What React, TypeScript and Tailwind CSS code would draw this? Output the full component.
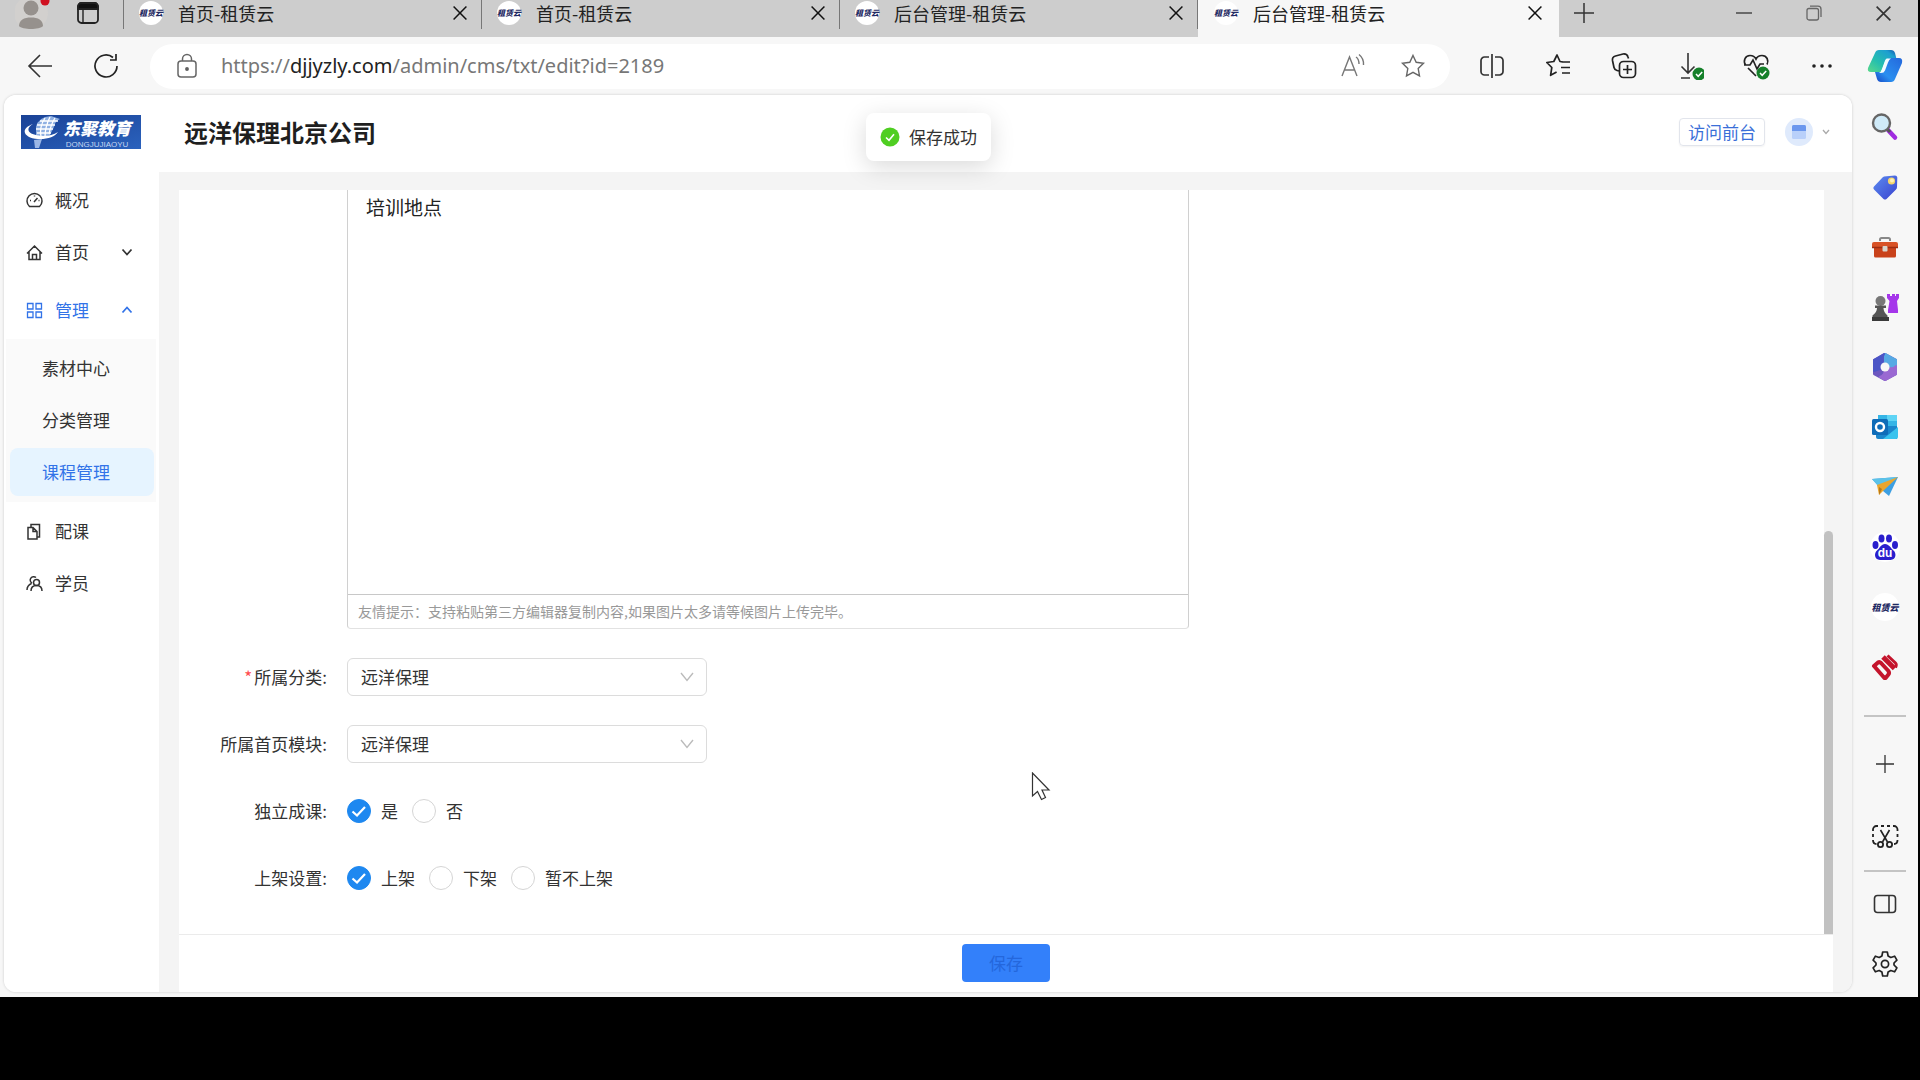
import React from "react";

type IconProps = { className?: string };

const CloseIcon = ({ className = "h-3 w-3" }: IconProps) => (
  <svg viewBox="0 0 12 12" className={className} fill="none" stroke="currentColor" strokeWidth="1.3">
    <path d="M0.5 0.5 11.5 11.5M11.5 0.5 0.5 11.5" />
  </svg>
);

const Favicon = () => (
  <span className="flex h-6 w-6 shrink-0 items-center justify-center rounded-full bg-white">
    <span className="text-[8px] leading-none font-black whitespace-nowrap text-[#1f2a63] italic">租赁云</span>
  </span>
);

const Tab = ({ title, active = false }: { title: string; active?: boolean }) => (
  <div
    className={
      active
        ? "flex w-[361px] items-start bg-[#f7f7f7] pr-[3px] pl-4"
        : "flex w-[358px] items-start pl-[15px]"
    }
  >
    <div className="flex h-[26px] flex-1 items-center gap-[15px]">
      <Favicon />
      <span className="flex-1 text-[18px] leading-6 text-[#222]">{title}</span>
      <button aria-label="关闭标签页" className="mr-[14px] text-[#111]">
        <CloseIcon className="h-[14px] w-[14px]" />
      </button>
    </div>
    {!active && <span className="h-[29px] w-px bg-[#777]" />}
  </div>
);

const TabStrip = () => (
  <div className="flex h-[37px] shrink-0 overflow-hidden bg-[#cdcdcd]">
    <div className="flex h-[29px] w-[124px] items-start border-r border-[#777] pl-[15px]">
      <button aria-label="用户配置" className="h-[29px] w-9">
        <svg viewBox="0 0 36 29" className="h-[29px] w-9">
          <circle cx="16" cy="13" r="17" fill="#d2d0ce" />
          <circle cx="16" cy="8" r="7.5" fill="#96918d" />
          <path d="M4 26c0-6 5-8.5 12-8.5S28 20 28 26c-3 4-21 4-24 0Z" fill="#96918d" />
          <circle cx="30" cy="1" r="4.500" fill="#cf1020" />
        </svg>
      </button>
      <button aria-label="标签页操作" className="ml-[25px] h-[26px] w-[24px]">
        <svg viewBox="0 0 24 26" className="h-[26px] w-[24px]" fill="none" stroke="#222" strokeWidth="1.8">
          <rect x="2" y="3" width="20" height="20" rx="3.5" />
          <path d="M2 9V6.500A3.500 3.500 0 0 1 5.500 3h13A3.500 3.500 0 0 1 22 6.500V9Z" fill="#111" />
          <path d="M7 9v14" strokeWidth="1.4" />
        </svg>
      </button>
    </div>
    <Tab title="首页-租赁云" />
    <Tab title="首页-租赁云" />
    <Tab title="后台管理-租赁云" />
    <Tab title="后台管理-租赁云" active />
    <button aria-label="新建标签页" className="ml-[14px] flex h-[26px] items-center text-[#333]">
      <svg viewBox="0 0 22 22" className="h-[22px] w-[22px]" stroke="currentColor" strokeWidth="1.5">
        <path d="M11 1v20M1 11h20" />
      </svg>
    </button>
    <div className="ml-auto flex h-[26px] items-center gap-[54px] pr-[27px] text-[#333]">
      <button aria-label="最小化">
        <svg viewBox="0 0 16 16" className="h-4 w-4" stroke="currentColor" strokeWidth="1.3">
          <path d="M0 8h16" />
        </svg>
      </button>
      <button aria-label="还原">
        <svg viewBox="0 0 16 16" className="h-4 w-4" fill="none" stroke="#666" strokeWidth="1.3">
          <rect x="1" y="3.500" width="11.500" height="11.500" rx="2" />
          <path d="M4 1.200h8a3 3 0 0 1 3 3V12" />
        </svg>
      </button>
      <button aria-label="关闭">
        <CloseIcon className="h-[15px] w-[15px]" />
      </button>
    </div>
  </div>
);

const starPath = "M13 2.500l3.200 6.800 7.300 1-5.300 5.200 1.300 7.400L13 19.300l-6.500 3.600 1.300-7.400L2.500 10.300l7.300-1Z";

const CopilotIcon = () => (
  <svg viewBox="0 0 36 34" className="h-[34px] w-9">
    <defs>
      <linearGradient id="cpA" x1="0" y1="1" x2="1" y2="0">
        <stop offset="0" stopColor="#5bd98a" />
        <stop offset="0.4" stopColor="#25bfae" />
        <stop offset="0.8" stopColor="#1d9fd0" />
        <stop offset="1" stopColor="#1450a8" />
      </linearGradient>
      <linearGradient id="cpB" x1="0" y1="1" x2="1" y2="0">
        <stop offset="0" stopColor="#1546c4" />
        <stop offset="0.35" stopColor="#2a8ff0" />
        <stop offset="1" stopColor="#2468dc" />
      </linearGradient>
    </defs>
    <path d="M8 4q1-3 4-3h12q3 0 4 3l1.500 6H22q-3 0-4 3l-4 10H4q-4 0-3-4Z" fill="url(#cpA)" />
    <path d="M28 30q-1 3-4 3H14q-3 0-4-3l-2-7h6q2 0 3-3l3.500-9q1-2 4-2H32q4 0 3 5Z" fill="url(#cpB)" />
    <path d="M20 9.500h4q-2 1-3 4l-3 8q-1 2.500-4 2.500h-2q2-1 3-4l2.500-7q1-3.500 2.500-3.500Z" fill="#f3fbff" />
  </svg>
);

const GreenTick = ({ cx, cy }: { cx: number; cy: number }) => (
  <g>
    <circle cx={cx} cy={cy} r="6.500" fill="#15802a" stroke="none" />
    <path d={`M${cx - 3} ${cy}l2.200 2.300 4-4.300`} stroke="#fff" strokeWidth="1.500" fill="none" />
  </g>
);

const tool = "h-7 w-7";

const Toolbar = () => (
  <div className="flex h-[58px] shrink-0 items-center bg-[#f7f7f7]">
    <button aria-label="后退" className="ml-[26px]">
      <svg viewBox="0 0 28 28" className={tool} fill="none" stroke="#333" strokeWidth="1.600">
        <path d="M26 14H3M14 3 3 14l11 11" />
      </svg>
    </button>
    <button aria-label="刷新" className="ml-[38px]">
      <svg viewBox="0 0 28 28" className={tool} fill="none" stroke="#222" strokeWidth="1.700">
        <path d="M25 14a11 11 0 1 1-4-8.500M24 2v6h-6" />
      </svg>
    </button>
    <div className="ml-[30px] flex h-[45px] flex-1 items-center rounded-full bg-white pr-6 pl-[27px]">
      <svg viewBox="0 0 20 26" className="h-[26px] w-5 shrink-0" fill="none" stroke="#666" strokeWidth="1.500">
        <rect x="1" y="8" width="18" height="16" rx="3" />
        <path d="M5.500 8V6a4.500 4.500 0 0 1 9 0v2" />
        <circle cx="10" cy="16" r="1.200" fill="#333" />
      </svg>
      <a
        href="#address"
        className="ml-6 flex-1 font-['Noto_Sans','Noto_Sans_CJK_SC',sans-serif] text-[20px] leading-7 whitespace-nowrap text-[#777]"
      >
        https://<span className="text-[#222]">djjyzly.com</span>/admin/cms/txt/edit?id=2189
      </a>
      <button aria-label="大声朗读" className="mr-[34px]">
        <svg viewBox="0 0 26 26" className="h-[26px] w-[26px]" fill="none" stroke="#777" strokeWidth="1.400">
          <path d="M2 23 9.500 4 17 23M4.800 17h9.500M16 4q3 2 3 7M19 1.500q5 4 4.500 10.500" />
        </svg>
      </button>
      <button aria-label="收藏此页">
        <svg viewBox="0 0 26 26" className="h-[26px] w-[26px]" fill="none" stroke="#666" strokeWidth="1.400">
          <path d={starPath} />
        </svg>
      </button>
    </div>
    <div className="flex items-center gap-[38px] pl-7">
      <button aria-label="分屏">
        <svg viewBox="0 0 28 28" className={tool} fill="none" stroke="#333" strokeWidth="1.700">
          <path d="M11 5H6.500A3.500 3.500 0 0 0 3 8.500v11A3.500 3.500 0 0 0 6.500 23H11M17 5h4.500A3.500 3.500 0 0 1 25 8.500v11a3.500 3.500 0 0 1-3.500 3.500H17M14 2v24" />
        </svg>
      </button>
      <button aria-label="收藏夹">
        <svg viewBox="0 0 28 28" className={tool} fill="none" stroke="#222" strokeWidth="1.700" strokeLinejoin="round">
          <path d="M18.500 9.800 16 9.500 13 3l-3.200 6.500-7 1 5 5-1.200 7.800 6-3.300M18 10h8M17 15.500h9M18 21h8" />
        </svg>
      </button>
      <button aria-label="集锦">
        <svg viewBox="0 0 28 28" className={tool} fill="none" stroke="#222" strokeWidth="1.700">
          <rect x="9.500" y="9.500" width="16" height="16" rx="4" />
          <path d="M17.500 13v9M13 17.500h9M9 19l-2-.5a4 4 0 0 1-3-3L2.500 8.500a4 4 0 0 1 3-4.500L13 2q4-.5 5 3l.5 1.500" />
        </svg>
      </button>
      <button aria-label="下载">
        <svg viewBox="0 0 28 28" className={tool} fill="none" stroke="#333" strokeWidth="1.600">
          <path d="M12 1v20M5.500 14.500 12 21l6.500-6.500M5 26h9" />
          <GreenTick cx={23} cy={22} />
        </svg>
      </button>
      <button aria-label="浏览器概要">
        <svg viewBox="0 0 28 28" className={tool} fill="none" stroke="#222" strokeWidth="1.700">
          <path d="m14 24-3-3M3.500 13C1 9 3 3.500 8 3.500c3 0 5 1.500 6 3.500 1-2 3-3.500 6-3.500 5 0 7 5 5 9M2 13h6l3-5 4 9 3-5h4M6 16l6 6" />
          <GreenTick cx={21} cy={21} />
        </svg>
      </button>
      <button aria-label="设置及其他">
        <svg viewBox="0 0 28 28" className={tool} fill="#222">
          <circle cx="6" cy="14" r="1.800" />
          <circle cx="14" cy="14" r="1.800" />
          <circle cx="22" cy="14" r="1.800" />
        </svg>
      </button>
    </div>
    <button aria-label="Copilot" className="mr-[15px] ml-[31px]">
      <CopilotIcon />
    </button>
  </div>
);

const SideCell = ({ label, children }: { label: string; children: React.ReactNode }) => (
  <button aria-label={label} className="flex h-[60px] w-full shrink-0 items-center justify-center">
    {children}
  </button>
);

const side = "h-7 w-7";

const EdgeSidebar = () => (
  <aside className="flex w-[66px] shrink-0 flex-col items-center pt-[2px]">
    <SideCell label="搜索">
      <svg viewBox="0 0 28 28" className={side}>
        <path d="m17 17 7 7.500" stroke="#a02be0" strokeWidth="4.500" strokeLinecap="round" />
        <path d="m16 16 3 3" stroke="#555" strokeWidth="3" />
        <circle cx="10.500" cy="10" r="8.500" fill="#cfeaf8" stroke="#666" strokeWidth="2.400" />
      </svg>
    </SideCell>
    <SideCell label="购物">
      <svg viewBox="0 0 28 28" className={side}>
        <defs>
          <linearGradient id="tag" x1="0" y1="0" x2="1" y2="1">
            <stop offset="0" stopColor="#5c8df0" />
            <stop offset="1" stopColor="#3941cf" />
          </linearGradient>
        </defs>
        <path d="M13 3.500 24 2.500q2 0 2.300 2L26 14q0 1.500-1 2.500L15.500 26q-1.500 1.200-3 0L3 16.500q-1.500-1.500 0-3L11.500 4.500Z" fill="url(#tag)" />
        <circle cx="20.500" cy="8" r="3.600" fill="#f5d56a" />
        <circle cx="21" cy="7.500" r="2" fill="#fff1b5" />
      </svg>
    </SideCell>
    <SideCell label="工具">
      <svg viewBox="0 0 28 28" className={side}>
        <path d="M9 8V6.500Q9 5 10.500 5h7Q19 5 19 6.500V8" fill="none" stroke="#888" strokeWidth="2" />
        <path d="M3 14h22v9q0 1.500-1.500 1.500h-19Q3 24.500 3 23Z" fill="#c9421b" />
        <path d="M1 11q0-2 2-2h22q2 0 2 2v4H1Z" fill="#d85226" />
        <path d="M1 14.500h26" stroke="#9d2d12" strokeWidth="1.500" />
        <rect x="11.500" y="13" width="5" height="5.500" rx="1" fill="#d8d4cc" />
      </svg>
    </SideCell>
    <SideCell label="游戏">
      <svg viewBox="0 0 28 28" className={side}>
        <path d="M16 1h3v2h2V1h3v2h1V1h3v4l-2 3 1 9v3H17v-3l1.500-9L16 5Z" fill="#a536ea" />
        <circle cx="9.500" cy="8" r="5" fill="#777" />
        <path d="M4 12.500h11v2.500h-2.500q0 4 4 7.500v5H1.500v-5q4.500-3.500 4.500-7.500H4Z" fill="#555" />
        <path d="M1 24h17v4H1Z" fill="#3a3a3a" />
      </svg>
    </SideCell>
    <SideCell label="Microsoft 365">
      <svg viewBox="0 0 28 28" className={side}>
        <path d="M14 1 25 7v14l-11 6L3 21V7Z" fill="#6d57bf" stroke="#6d57bf" strokeWidth="2" strokeLinejoin="round" />
        <path d="M14 14V1l11 6v14Z" fill="#56a9e4" stroke="#56a9e4" strokeWidth="2" strokeLinejoin="round" />
        <path d="M14 14 3 18V7l10-6q-2 3-1 8Z" fill="#4b55c6" stroke="#4b55c6" strokeWidth="2" strokeLinejoin="round" />
        <path d="M14 14q8 3 11-1v8l-11 6-5-3q6-2 5-10Z" fill="#9a69d2" stroke="#9a69d2" strokeWidth="2" strokeLinejoin="round" />
        <circle cx="14" cy="14" r="4.500" fill="#f7f7f7" />
      </svg>
    </SideCell>
    <SideCell label="Outlook">
      <svg viewBox="0 0 28 28" className={side}>
        <rect x="7" y="2" width="19" height="14" fill="#35b5e6" />
        <rect x="16" y="2" width="10" height="6" fill="#5fd4f5" />
        <path d="M5 13h21v13H7q-2 0-2-2Z" fill="#1b86cc" />
        <path d="m12 26 15-12v10q0 2-2 2Z" fill="#39c3ee" />
        <rect x="1" y="6" width="16" height="16" rx="1.500" fill="#0f6cb8" />
        <circle cx="9" cy="14" r="4" fill="none" stroke="#fff" strokeWidth="2.400" />
      </svg>
    </SideCell>
    <SideCell label="Drop">
      <svg viewBox="0 0 28 28" className={side}>
        <path d="M1 6 27 4 18 23 12 18Z" fill="#3d9fe2" />
        <path d="M1 6 27 4 8 14Z" fill="#5cc2e8" />
        <path d="m6 12 21-8L12 18l-4 4Z" fill="#eba52c" />
        <path d="m8 14 3 2-3 6Z" fill="#b87918" />
      </svg>
    </SideCell>
    <SideCell label="百度">
      <span className="flex h-[30px] w-[30px] items-center justify-center rounded-full bg-white">
        <svg viewBox="0 0 28 28" className={side} fill="#2a1fcd">
          <ellipse cx="4.500" cy="12" rx="3" ry="3.900" />
          <ellipse cx="10.500" cy="5.500" rx="3" ry="4" />
          <ellipse cx="18" cy="5.500" rx="3" ry="4" />
          <ellipse cx="24" cy="12" rx="3" ry="3.900" />
          <path d="M14 11c-4 0-5 4-8 6.500s-3 9 3 9.500h10.500c6-.5 6-7 3-9.500S18 11 14 11Z" />
          <text x="14" y="24" textAnchor="middle" fontFamily="Liberation Sans, sans-serif" fontSize="12" fontWeight="700" fill="#fff">
            du
          </text>
        </svg>
      </span>
    </SideCell>
    <SideCell label="租赁云">
      <span className="flex h-7 w-7 items-center justify-center rounded-full bg-white">
        <span className="text-[9px] leading-none font-black whitespace-nowrap text-[#1f2a63] italic">租赁云</span>
      </span>
    </SideCell>
    <SideCell label="DJ">
      <svg viewBox="0 0 28 28" className={side} fill="none" stroke="#c4142c">
        <path d="M3 13 7 9.500q1.500-1 3 .5l7 7.500q2 2.500 0 4.500l-2 2.500q-1 1-2 0Z" strokeWidth="4" strokeLinejoin="round" />
        <path d="m12 4 11.500 11.500" strokeWidth="5" />
        <path d="m16.500 2.500 8 7.500q1.500 1.500 0 4.500" strokeWidth="3" />
      </svg>
    </SideCell>
    <hr className="mt-[18px] w-[42px] shrink-0 border-t-2 border-[#c4c4c4]" />
    <div className="mt-[17px] flex w-full flex-col">
      <SideCell label="自定义">
        <svg viewBox="0 0 18 18" className="h-[18px] w-[18px]" stroke="#333" strokeWidth="1.300">
          <path d="M9 0v18M0 9h18" />
        </svg>
      </SideCell>
    </div>
    <div className="mt-3 flex w-full flex-col">
      <SideCell label="截图">
        <svg viewBox="0 0 28 28" className={side} fill="none" stroke="#222" strokeWidth="1.800">
          <path d="M2 9V7.500A3.500 3.500 0 0 1 5.500 4H7M10 4h3M16 4h3M22 4h1a3.500 3.500 0 0 1 3.500 3.500V9M2 12v3M26.500 12v3M2 18q0 4 3.500 4M26.500 18q0 4-3.500 4" />
          <path d="m9.500 8 7 12M18.500 8l-7 12" strokeWidth="1.600" />
          <circle cx="9.500" cy="22.500" r="2.600" />
          <circle cx="18.500" cy="22.500" r="2.600" />
        </svg>
      </SideCell>
    </div>
    <hr className="mt-1 w-[42px] shrink-0 border-t-2 border-[#c4c4c4]" />
    <div className="mt-[2px] flex w-full flex-col">
      <SideCell label="侧栏">
        <svg viewBox="0 0 24 20" className="h-5 w-6" fill="none" stroke="#333" strokeWidth="1.600">
          <rect x="1.500" y="1.500" width="21" height="17" rx="3" />
          <path d="M16 1.500v17" />
        </svg>
      </SideCell>
      <SideCell label="设置">
        <svg viewBox="0 0 28 28" className={side} fill="none" stroke="#222" strokeWidth="1.700" strokeLinejoin="round">
          <path d="M11.700 2h4.600l.8 4 2.700 1.500 3.800-1.300 2.300 4L23 13v2l2.900 2.800-2.300 4-3.800-1.300-2.700 1.500-.8 4h-4.600l-.8-4-2.700-1.500-3.800 1.300-2.300-4L5 15v-2l-2.900-2.800 2.300-4 3.800 1.300L10.900 6Z" />
          <circle cx="14" cy="14" r="3.600" />
        </svg>
      </SideCell>
    </div>
  </aside>
);

const Logo = () => (
  <div className="flex h-[34px] w-[120px] items-center overflow-hidden bg-gradient-to-br from-[#1a4296] to-[#2b62bd] text-white">
    <svg viewBox="0 0 42 34" className="h-[34px] w-[42px] shrink-0" fill="none" stroke="#fff">
      <path d="M15 12Q17 2 30 1l9 3q-5 2-6 8l-4 8-8 3-6-3Z" fill="#8fb0e2" stroke="none" />
      <path d="M19 6h18M16 10h18M15 14h17M16 18h14M24 3q-6 9-4 19M29 2q-5 10-5 20M34 3q-4 6-6 16" strokeWidth="1.300" />
      <path d="M12 9C-2 14 3 23 17 24c9 .5 17-2 20-7-6 4-15 5-22 3-9-2-10-7-3-11Z" fill="#fff" stroke="none" />
      <path d="m13 25 8-1-3 9h-4Z" fill="#9bb7e6" stroke="none" />
    </svg>
    <div className="flex flex-col items-center">
      <span className="text-[17px] leading-[25px] font-black whitespace-nowrap italic">东聚教育</span>
      <span className="font-['Liberation_Sans',sans-serif] text-[8px] leading-[9px] whitespace-nowrap text-[#c5d6f2]">DONGJUJIAOYU</span>
    </div>
  </div>
);

const Header = () => (
  <header className="flex h-[77px] shrink-0 items-center bg-white pr-[22px] pb-[3px] pl-[17px]">
    <Logo />
    <h1 className="ml-[43px] text-[24px] leading-8 font-bold text-[#1f1f1f]">远洋保理北京公司</h1>
    <div className="ml-auto flex items-center">
      <button className="h-7 rounded-sm border border-[#e2e5ec] px-2 text-[17px] leading-6 text-[#3a6fd8] shadow-xs">访问前台</button>
      <button aria-label="账户" className="ml-5 flex items-center gap-[9px]">
        <span className="flex h-7 w-7 items-center justify-center rounded-full bg-[#dfeafc]">
          <svg viewBox="0 0 14 14" className="h-[14px] w-[14px]">
            <rect width="14" height="14" rx="1.500" fill="#b9d0fa" />
            <path d="M0 1.500Q0 0 1.500 0h11Q14 0 14 1.500V6H0Z" fill="#6b97ee" />
          </svg>
        </span>
        <svg viewBox="0 0 8 6" className="h-[6px] w-2" fill="none" stroke="#aaa" strokeWidth="1.300">
          <path d="m1 1 3 3.500L7 1" />
        </svg>
      </button>
    </div>
  </header>
);

const menuIcon = "h-[17px] w-[17px]";

const MenuItem = ({ icon, label, active = false, arrow }: { icon: React.ReactNode; label: string; active?: boolean; arrow?: "up" | "down" }) => (
  <a
    href="#menu"
    className={
      active
        ? "flex h-12 items-center pr-[26px] pl-[22px] text-[17px] text-[#3273e8]"
        : "flex h-12 items-center pr-[26px] pl-[22px] text-[17px] text-[#333]"
    }
  >
    {icon}
    <span className="ml-3 flex-1">{label}</span>
    {arrow && (
      <svg viewBox="0 0 12 8" className="h-2 w-3" fill="none" stroke="currentColor" strokeWidth="1.800">
        <path d={arrow === "up" ? "m1.500 6.500 4.500-5 4.500 5" : "m1.500 1.500 4.500 5 4.500-5"} />
      </svg>
    )}
  </a>
);

const SubItem = ({ label, active = false }: { label: string; active?: boolean }) => (
  <a
    href="#submenu"
    className={
      active
        ? "mr-[2px] ml-1 flex h-12 items-center rounded-lg bg-[#e6f4ff] pl-8 text-[17px] text-[#3273e8]"
        : "mr-[2px] ml-1 flex h-12 items-center rounded-lg pl-8 text-[17px] text-[#333]"
    }
  >
    {label}
  </a>
);

const SideMenu = () => (
  <nav className="flex w-[155px] shrink-0 flex-col bg-white pt-1">
    <div className="flex flex-col gap-1">
      <MenuItem
        label="概况"
        icon={
          <svg viewBox="0 0 17 17" className={menuIcon} fill="none" stroke="currentColor" strokeWidth="1.500">
            <path d="M3.500 14.500a7.500 7.500 0 1 1 10 0ZM8 10l3.500-4M8.500 3.500v1M4 8.500h1M12.500 8.500h1" />
          </svg>
        }
      />
      <MenuItem
        label="首页"
        arrow="down"
        icon={
          <svg viewBox="0 0 17 17" className={menuIcon} fill="none" stroke="currentColor" strokeWidth="1.500">
            <path d="M1 9.500 8.500 2 16 9.500M3 8v7.500h11V8M6.500 15v-4.500h4V15" />
          </svg>
        }
      />
    </div>
    <div className="mt-[10px]">
      <MenuItem
        label="管理"
        active
        arrow="up"
        icon={
          <svg viewBox="0 0 17 17" className={menuIcon} fill="none" stroke="currentColor" strokeWidth="1.300">
            <path d="M1.500 1.500h5.500v5.500H1.500ZM10 1.500h5.500v5.500H10ZM1.500 10h5.500v5.500H1.500ZM10 10h5.500v5.500H10Z" />
          </svg>
        }
      />
    </div>
    <div className="mt-[5px] mr-[3px] ml-[2px] flex flex-col gap-1 bg-[#fafafa] pt-[5px] pb-[6px]">
      <SubItem label="素材中心" />
      <SubItem label="分类管理" />
      <SubItem label="课程管理" active />
    </div>
    <div className="mt-[5px] flex flex-col gap-1">
      <MenuItem
        label="配课"
        icon={
          <svg viewBox="0 0 17 17" className={menuIcon} fill="none" stroke="currentColor" strokeWidth="1.500">
            <path d="M2 4.500h5l4 4v7.500H2ZM7 4.500v4h4M5 4V1.500h8.500V14H11" />
          </svg>
        }
      />
      <MenuItem
        label="学员"
        icon={
          <svg viewBox="0 0 17 17" className={menuIcon} fill="none" stroke="currentColor" strokeWidth="1.500">
            <circle cx="10.500" cy="7.500" r="3" />
            <path d="M5 16q0-5.500 5.500-5.500T16 16M10 2.500a3.500 3.500 0 1 0-4 5.700M1 15q0-4.500 4.500-6.500" />
          </svg>
        }
      />
    </div>
  </nav>
);

const SelectRow = ({ id, label, required = false }: { id: string; label: string; required?: boolean }) => (
  <div className="flex h-[38px] items-center">
    <label htmlFor={id} className="mr-5 w-[148px] shrink-0 text-right text-[17px] whitespace-nowrap text-[#333]">
      {required && <span className="mr-[2px] text-[17px] text-[#ff4d4f]">*</span>}
      {label}:
    </label>
    <div className="relative w-[360px]">
      <select
        id={id}
        className="h-[38px] w-full appearance-none rounded-md border border-[#dcdcdc] bg-white px-[13px] text-[17px] text-[#333]"
      >
        <option>远洋保理</option>
      </select>
      <svg viewBox="0 0 14 10" className="pointer-events-none absolute top-[14px] right-[13px] h-[10px] w-[14px]" fill="none" stroke="#bbb" strokeWidth="1.400">
        <path d="m1 1 6 7.500L13 1" />
      </svg>
    </div>
  </div>
);

const RadioRow = ({ name, label, options }: { name: string; label: string; options: string[] }) => (
  <fieldset aria-label={label}>
    <div className="flex h-[38px] items-center">
      <span className="mr-5 w-[148px] shrink-0 text-right text-[17px] whitespace-nowrap text-[#333]">{label}:</span>
      <div className="flex gap-[14px]">
        {options.map((option, i) => (
          <label key={option} className="flex items-center gap-[10px] text-[17px] leading-6 text-[#333]">
            <span className="relative flex h-6 w-6">
              <input
                type="radio"
                name={name}
                defaultChecked={i === 0}
                className="peer h-6 w-6 appearance-none rounded-full border border-[#d5d5d5] bg-white checked:border-[#1e88f0] checked:bg-[#1e88f0]"
              />
              <svg
                viewBox="0 0 24 24"
                className="pointer-events-none absolute inset-0 hidden h-6 w-6 peer-checked:block"
                fill="none"
                stroke="#fff"
                strokeWidth="2.200"
              >
                <path d="m5.500 12.500 4.500 4 8-8.500" />
              </svg>
            </span>
            {option}
          </label>
        ))}
      </div>
    </div>
  </fieldset>
);

const Cursor = () => (
  <svg viewBox="0 0 20 30" className="pointer-events-none absolute top-[772px] left-[1031px] h-[30px] w-5" fill="#fff" stroke="#333" strokeWidth="1.200">
    <path d="M1.500 1v23l5-4.500 4 8 4-2-3.500-7.500H18Z" />
  </svg>
);

const Toast = () => (
  <div role="status" className="absolute top-[113px] left-[866px] flex h-12 items-center gap-[9px] rounded-lg bg-white px-[14px] text-[17px] text-[#333] shadow-[0_6px_24px_rgba(0,0,0,0.15)]">
    <svg viewBox="0 0 20 20" className="h-5 w-5">
      <circle cx="10" cy="10" r="9.500" fill="#4fce22" />
      <path d="m6 10.500 3 2.800 5-6" fill="none" stroke="#fff" strokeWidth="1.600" />
    </svg>
    保存成功
  </div>
);

export default function App() {
  return (
    <div className="relative flex h-screen flex-col bg-black pr-[2px] pb-[83px] font-['Noto_Sans_CJK_SC',sans-serif]">
      <TabStrip />
      <Toolbar />
      <div className="flex min-h-0 flex-1 bg-[#f7f7f7] pb-[5px] pl-1">
        <div className="flex min-w-0 flex-1 flex-col overflow-hidden rounded-xl bg-white shadow-[0_0_3px_rgba(0,0,0,0.18)]">
          <Header />
          <div className="flex min-h-0 flex-1">
            <SideMenu />
            <main className="flex min-w-0 flex-1 flex-col bg-[#f4f4f4] pt-[18px] pr-[19px] pl-5">
              <div className="flex min-h-0 flex-1">
                <form className="flex min-w-0 flex-1 flex-col gap-[29px] overflow-hidden bg-white">
                  <div className="ml-[168px] max-w-[842px] shrink-0 rounded-b-sm border border-t-0 border-[#d0d0d0] border-b-[#e2e2e2]">
                    <textarea
                      aria-label="课程内容"
                      defaultValue="培训地点"
                      className="block h-[405px] w-full resize-none border-b border-[#c8c8c8] px-[18px] py-[3px] text-[19px] leading-7 text-[#222]"
                    />
                    <p className="px-[10px] text-[14px] leading-[33px] text-[#999]">
                      友情提示：支持粘贴第三方编辑器复制内容,如果图片太多请等候图片上传完毕。
                    </p>
                  </div>
                  <SelectRow id="category" label="所属分类" required />
                  <SelectRow id="module" label="所属首页模块" />
                  <RadioRow name="standalone" label="独立成课" options={["是", "否"]} />
                  <RadioRow name="shelf" label="上架设置" options={["上架", "下架", "暂不上架"]} />
                </form>
                <div className="flex w-[9px] flex-col justify-end">
                  <div className="h-[403px] rounded-t-full bg-[#c1c1c1]" />
                </div>
              </div>
              <div className="flex h-[58px] shrink-0 items-center justify-center border-t border-[#ebebeb] bg-white pb-[2px]">
                <button className="h-[38px] w-[88px] rounded-sm bg-[#3380fa] text-[17px] text-[#2467dc]">保存</button>
              </div>
            </main>
          </div>
        </div>
        <EdgeSidebar />
      </div>
      <Toast />
      <Cursor />
    </div>
  );
}
